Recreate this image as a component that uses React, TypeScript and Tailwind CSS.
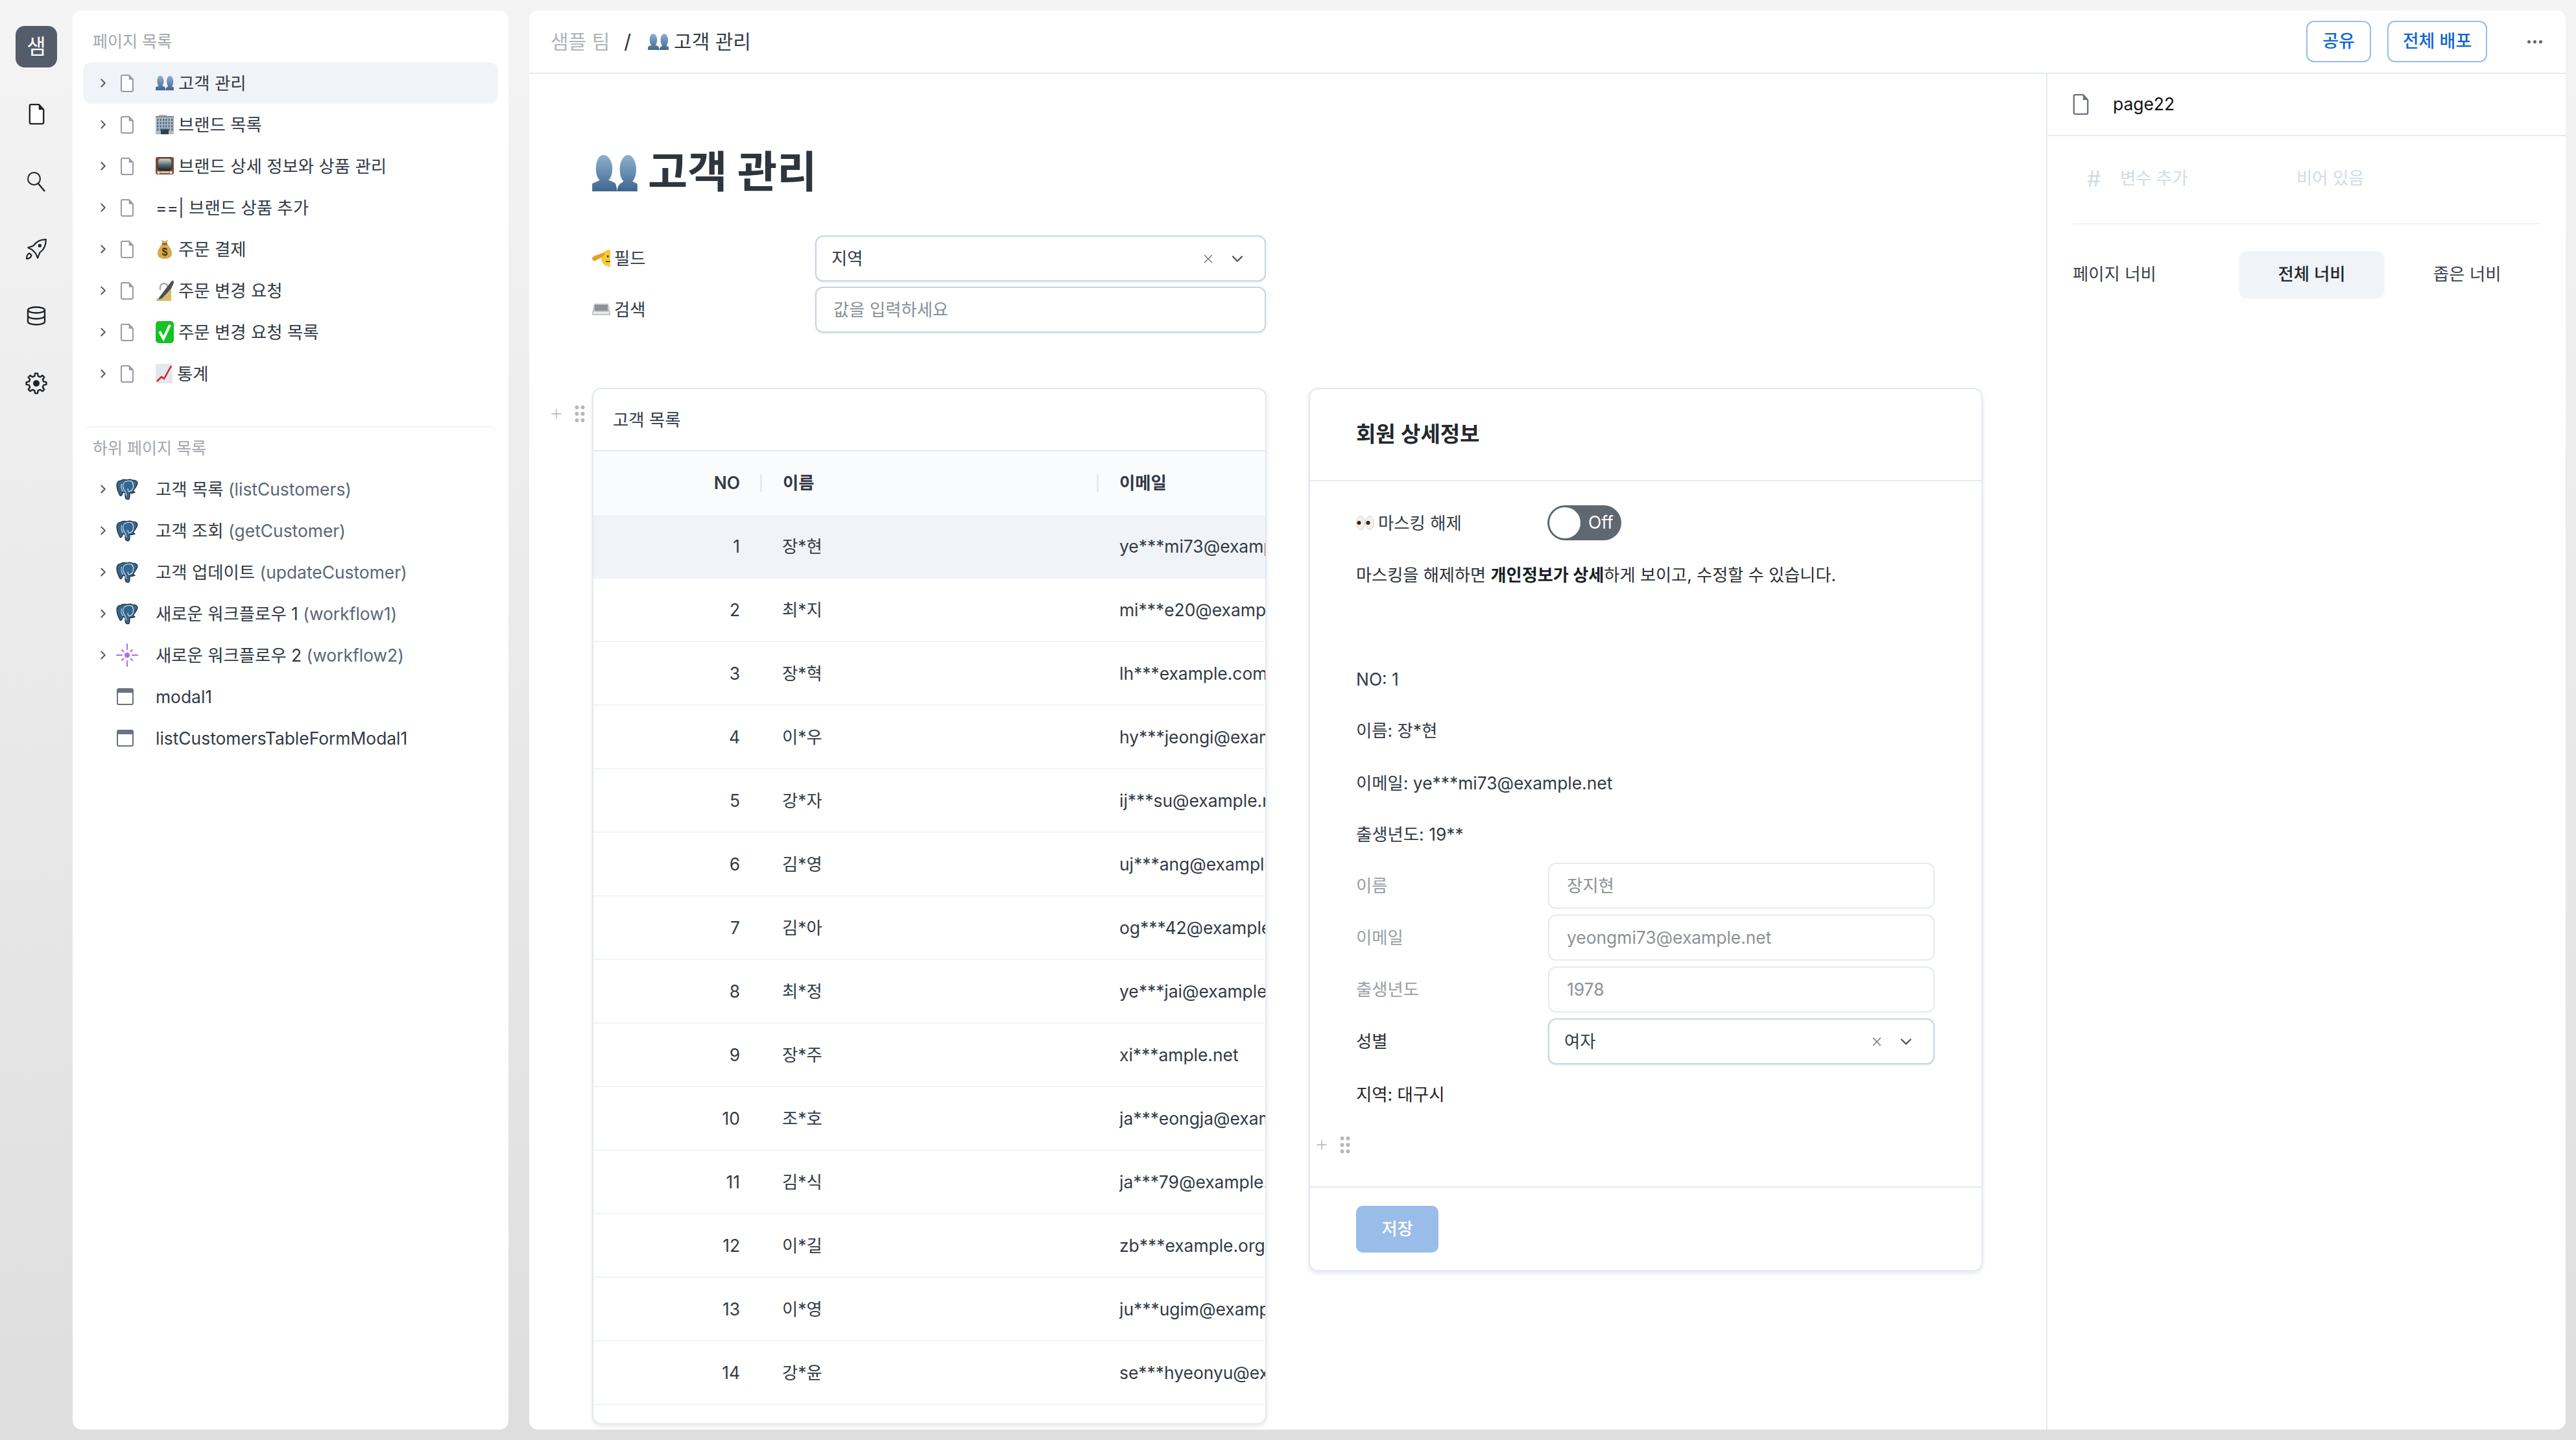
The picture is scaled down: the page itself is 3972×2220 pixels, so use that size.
import React from "react";
import { ChevronRight, ChevronDown, X, Plus } from "lucide-react";

const Busts = ({ s }: { s: number }) => (
  <svg width={s} height={s * 0.83} viewBox="0 0 36 30" className="shrink-0">
    <defs>
      <linearGradient id="bu" x1="0" y1="0" x2="0" y2="1">
        <stop offset="0" stopColor="#8fb0d2" />
        <stop offset="1" stopColor="#3f658f" />
      </linearGradient>
    </defs>
    <path d="M20 30c0-5 2-6 5-8-2-2-3-5-3-10 0-6 3-11 6.500-11S35 6 35 12c0 5-1 8-3 10l4 2v6z" fill="url(#bu)" />
    <path d="M0 30v-6c1-1 4-2 6-3-2-2-3-5-3-9C3 6 5 1 9 1s7 5 7 11c0 4-1 7-3 9 3 1 6 2 6 4l1 5z" fill="url(#bu)" />
  </svg>
);

const Building = () => (
  <svg width="28" height="30" viewBox="0 0 28 30" className="shrink-0">
    <rect x="5" y="0" width="12" height="3" fill="#b9b5aa" />
    <rect x="0" y="2" width="28" height="28" fill="#b4bcc2" />
    <rect x="0" y="2" width="28" height="2" fill="#7d8388" />
    {[6, 11, 16, 21].map((y) => (
      <g key={y}>
        {[2, 6.500, 11, 15, 19.500, 24].map((x) => (
          <rect key={x} x={x} y={y} width="2.500" height="3.500" fill="#51728c" />
        ))}
      </g>
    ))}
    <rect x="8" y="22" width="12" height="8" fill="#2f4352" />
    <rect x="7" y="21" width="14" height="1.500" fill="#6d7a84" />
  </svg>
);

const Tv = () => (
  <svg width="28" height="28" viewBox="0 0 28 28" className="shrink-0">
    <defs>
      <linearGradient id="tvs" x1="0" y1="0" x2="0" y2="1">
        <stop offset="0" stopColor="#d5dfe0" />
        <stop offset=".55" stopColor="#59686b" />
        <stop offset="1" stopColor="#1d2426" />
      </linearGradient>
    </defs>
    <rect x="0" y="0" width="28" height="27" rx="3" fill="#8c4a33" />
    <rect x="2" y="22" width="24" height="3" fill="#d8c5b4" />
    <rect x="3" y="2" width="22" height="19" rx="5" fill="url(#tvs)" stroke="#2b2f30" />
    <circle cx="4.500" cy="24" r="2.500" fill="#efe5d8" stroke="#5b3222" strokeWidth=".6" />
    <circle cx="23.500" cy="24" r="2.500" fill="#efe5d8" stroke="#5b3222" strokeWidth=".6" />
  </svg>
);

const Bag = () => (
  <svg width="28" height="30" viewBox="0 0 28 30" className="shrink-0">
    <path d="M9 1l5 2 5-2-2 6c5 4 8 10 8 15 0 5-4 8-11 8S3 27 3 22c0-5 3-11 8-15z" fill="#d9a94f" />
    <rect x="10" y="6" width="8" height="2.500" fill="#7d5a24" />
    <text x="14" y="25" textAnchor="middle" fontSize="16" fontWeight="700" fill="#4a3514" fontFamily="Liberation Sans">$</text>
  </svg>
);

const PenLock = () => (
  <svg width="28" height="32" viewBox="0 0 28 32" className="shrink-0">
    <path d="M7 15v-4a6 6 0 0 1 12 0v4" fill="none" stroke="#a9a9a9" strokeWidth="2.500" />
    <path d="M0 32L24 14v18z" fill="#d8bc64" />
    <path d="M2 31L24 2l3-2 1 4-4 9-14 15z" fill="#4a4f55" />
    <path d="M0 32l2-5 4 2z" fill="#c9c9c9" />
  </svg>
);

const Check = () => (
  <svg width="28" height="34" viewBox="0 0 28 34" className="shrink-0">
    <rect width="28" height="34" rx="5" fill="#14c322" />
    <path d="M6 16l6 11L22 6" fill="none" stroke="#fff" strokeWidth="4" />
  </svg>
);

const Chart = () => (
  <svg width="26" height="30" viewBox="0 0 26 30" className="shrink-0">
    <rect width="26" height="30" fill="#e4e8ec" />
    <path d="M2 27l7-7 4 3L24 3" fill="none" stroke="#d2232a" strokeWidth="2.500" />
  </svg>
);

const Salute = () => (
  <svg width="28" height="26" viewBox="0 0 28 26" className="shrink-0">
    <circle cx="27" cy="13" r="13" fill="#f6c83a" />
    <rect x="23" y="8.500" width="2.500" height="3.500" rx="1" fill="#4a3514" />
    <rect x="21" y="17.500" width="7" height="1.500" fill="#4a3514" />
    <path d="M0 13c1-3 7-5 11-6 3-1 6-3 8-2 1 1 0 4-2 5-3 2-8 5-12 7-3 1-5-1-5-4z" fill="#eb9f24" />
  </svg>
);

const Keyboard = () => (
  <svg width="28" height="20" viewBox="0 0 28 20" className="shrink-0">
    <path d="M3 1h22l3 14v4H0v-4z" fill="#c4c6c9" />
    <rect x="4" y="3" width="20" height="9" fill="#8e9094" />
    <rect x="2" y="14" width="24" height="3" fill="#e9eaec" />
  </svg>
);

const Eyes = () => (
  <svg width="28" height="22" viewBox="0 0 28 22" className="shrink-0">
    <ellipse cx="7" cy="11" rx="6.500" ry="10.500" fill="#f2f0ec" stroke="#d8d4cc" />
    <ellipse cx="21" cy="11" rx="6.500" ry="10.500" fill="#f2f0ec" stroke="#d8d4cc" />
    <circle cx="4.500" cy="11" r="3" fill="#3a2208" />
    <circle cx="18.500" cy="11" r="3" fill="#3a2208" />
  </svg>
);

const FileIcon = ({ w = 20, h = 27, c = "#969ba6", sw = 2 }: { w?: number; h?: number; c?: string; sw?: number }) => (
  <svg width={w} height={h} viewBox="0 0 20 27" className="shrink-0">
    <path d="M2.500 1H13l6 6.500V24a2 2 0 0 1-2 2H3a2 2 0 0 1-2-2V2.500A1.500 1.500 0 0 1 2.500 1z" fill="#fff" stroke={c} strokeWidth={sw} />
    <path d="M13 1v6.500h6z" fill={c} stroke={c} strokeWidth="0.500" />
  </svg>
);

const Elephant = () => (
  <svg width="34" height="34" viewBox="-1 -1 34 34" className="shrink-0">
    <path
      d="M6 3C2 3 0 6 0 10c0 5 2 10 4 14 1 3 3 3 4 1l2-5c1 2 2 2 3 2v5c0 4 3 5 4 5 2 0 3-2 3-5v-5c3 1 5 0 8-1l-3-2c4-5 7-10 7-13-1-3-5-4-8-4-3-1-6-1-8 0-3-1-7-1-10 1z"
      fill="#336791"
      stroke="#20262c"
      strokeWidth="1.200"
    />
    <path d="M8 8c-2 3-1 8 2 12M15 4c-4 1-6 5-5 10 1 3 3 5 4 8 0 1 0 3 1 4M23 4c3 3 3 7 2 11-1 3-3 4-6 5-1 0-2-3-2-5M15 4c2-1 5-1 8 0" fill="none" stroke="#e8eef3" strokeWidth="1.100" />
  </svg>
);

const Sparkle = () => (
  <svg width="34" height="36" viewBox="0 0 34 36" className="shrink-0">
    <circle cx="17" cy="18" r="4" fill="#a26ef7" />
    <g stroke="#a26ef7" strokeWidth="2" strokeLinecap="round">
      <path d="M17 1v8M17 27v8M1 18h8M25 18h8M9 10l2.500 2.500M25 10l-2.500 2.500M9 26l2.500-2.500M25 26l-2.500-2.500" />
    </g>
  </svg>
);

const WindowIcon = () => (
  <svg width="26" height="26" viewBox="0 0 26 26" className="shrink-0">
    <rect x="1" y="1" width="24" height="24" rx="2" fill="#fff" stroke="#6b7280" strokeWidth="2" />
    <rect x="1" y="1" width="24" height="6" fill="#6b7280" />
  </svg>
);

const RocketIcon = () => (
  <svg width="32" height="32" viewBox="0 0 30 30" fill="none" stroke="#1f2328" strokeWidth="2" strokeLinejoin="round" className="mt-[72px]">
    <path d="M29 1c-8 0-14 3-18 9l-8 3 6 3 5 5 3 7 3-8c6-4 9-10 9-19z" />
    <circle cx="20" cy="10" r="2.500" fill="#1f2328" stroke="none" />
    <path d="M5 21c-3 1-4 4-4 8 4 0 6-2 7-5z" />
  </svg>
);

const DbIcon = () => (
  <svg width="30" height="30" viewBox="0 0 30 30" fill="none" stroke="#1f2328" strokeWidth="2.400" className="mt-[72px]">
    <ellipse cx="15" cy="6" rx="13" ry="4.500" />
    <path d="M2 6v18c0 2.500 6 4.500 13 4.500S28 26.500 28 24V6M2 15c0 2.500 6 4.500 13 4.500S28 17.500 28 15" />
  </svg>
);

const gearD = (() => {
  const pts: string[] = [];
  const n = 8;
  for (let i = 0; i < n; i++) {
    const a = (i * 2 * Math.PI) / n - Math.PI / 2;
    const t = (2 * Math.PI) / n;
    const p = (r: number, o: number) => `${(17 + r * Math.cos(a + o * t)).toFixed(2)},${(17 + r * Math.sin(a + o * t)).toFixed(2)}`;
    pts.push(p(11.500, -0.3), p(15.500, -0.16), p(15.500, 0.16), p(11.500, 0.3));
  }
  return pts.join(" ");
})();

const GearIcon = () => (
  <svg width="34" height="34" viewBox="0 0 34 34" className="mt-[72px]">
    <polygon points={gearD} fill="none" stroke="#1f2328" strokeWidth="2.400" strokeLinejoin="round" />
    <circle cx="17" cy="17" r="5" fill="#1f2328" />
  </svg>
);

const Dots = () => (
  <svg width="16" height="26" viewBox="0 0 16 26">
    {[3, 13, 23].map((y) => (
      <g key={y} fill="#b8b8b8">
        <circle cx="3.500" cy={y} r="3" />
        <circle cx="12.500" cy={y} r="3" />
      </g>
    ))}
  </svg>
);

const Handle = ({ className }: { className: string }) => (
  <div className={`absolute flex items-center gap-[16px] ${className}`}>
    <Plus size={24} strokeWidth={1.4} color="#b0b0b0" />
    <Dots />
  </div>
);

const Sel = ({ text, className }: { text: string; className: string }) => (
  <div className={`flex items-center rounded-[12px] border-2 border-[#c9d5e5] bg-white pl-[23px] pr-[28px] text-[#333a45] shadow-[0_1px_3px_rgba(30,50,80,0.12)] ${className}`}>
    <span className="flex-1">{text}</span>
    <X size={22} strokeWidth={1.5} color="#6b7280" />
    <ChevronDown size={28} strokeWidth={2} color="#4b5563" className="ml-[20px]" />
  </div>
);

const pages: [React.ReactNode, string][] = [
  [<Busts s={28} />, "고객 관리"],
  [<Building />, "브랜드 목록"],
  [<Tv />, "브랜드 상세 정보와 상품 관리"],
  [null, "==| 브랜드 상품 추가"],
  [<Bag />, "주문 결제"],
  [<PenLock />, "주문 변경 요청"],
  [<Check />, "주문 변경 요청 목록"],
  [<Chart />, "통계"],
];

const subs: [string, string][] = [
  ["고객 목록 ", "(listCustomers)"],
  ["고객 조회 ", "(getCustomer)"],
  ["고객 업데이트 ", "(updateCustomer)"],
  ["새로운 워크플로우 1 ", "(workflow1)"],
  ["새로운 워크플로우 2 ", "(workflow2)"],
];

const rows: [string, string][] = [
  ["장*현", "ye***mi73@example.net"],
  ["최*지", "mi***e20@example.com"],
  ["장*혁", "lh***example.com"],
  ["이*우", "hy***jeongi@example.net"],
  ["강*자", "ij***su@example.net"],
  ["김*영", "uj***ang@example.org"],
  ["김*아", "og***42@example.net"],
  ["최*정", "ye***jai@example.net"],
  ["장*주", "xi***ample.net"],
  ["조*호", "ja***eongja@example.com"],
  ["김*식", "ja***79@example.net"],
  ["이*길", "zb***example.org"],
  ["이*영", "ju***ugim@example.com"],
  ["강*윤", "se***hyeonyu@example.net"],
];

export default function App() {
  return (
    <div className="flex h-[2220px] w-[3972px] overflow-hidden bg-gradient-to-b from-[#f4f4f4] to-[#dedede] text-[26.4px] text-[#333a45] [font-family:Inter,'Noto_Sans_CJK_KR',sans-serif]">
      {/* rail */}
      <div className="flex w-[112px] shrink-0 flex-col items-center pt-[40px]">
        <div className="flex h-[64px] w-[64px] items-center justify-center rounded-[14px] bg-[#545c6a] text-[32px] text-white">샘</div>
        <div className="mt-[56px] flex h-[32px] items-center"><FileIcon w={25} h={32} c="#1f2328" /></div>
        <svg className="mt-[72px]" width="30" height="32" viewBox="0 0 30 32" fill="none" stroke="#1f2328" strokeWidth="2">
          <circle cx="11.500" cy="11.500" r="9.500" />
          <path d="M18 19l10 12" strokeWidth="2.500" />
        </svg>
        <RocketIcon />
        <DbIcon />
        <GearIcon />
      </div>

      {/* sidebar */}
      <div className="my-[16px] flex w-[672px] shrink-0 flex-col rounded-[14px] bg-white px-[16px] pt-[32px]">
        <div className="flex h-[32px] items-center pl-[15px] pt-[2px] text-[25px] text-[#a2a6ad]">페이지 목록</div>
        <div className="mt-[16px] flex flex-col">
          {pages.map(([icon, t], i) => (
            <div key={i} className={`flex h-[64px] items-center rounded-[14px] pl-[22px] ${i === 0 ? "bg-[#f0f3f8]" : ""}`}>
              <ChevronRight size={22} strokeWidth={2} color="#4b5563" className="-ml-[2px] shrink-0" />
              <div className="ml-[12px] flex w-[28px] justify-center"><FileIcon /></div>
              <div className="ml-[30px] flex items-center gap-[7px]">
                {icon}
                <span className="pt-[1px]">{t}</span>
              </div>
            </div>
          ))}
        </div>
        <div className="mt-[49px] h-[16px] rounded-t-[14px] border-t-2 border-[#f1f3f6]" />
        <div className="mt-[2px] flex h-[32px] items-center pl-[15px] pt-[2px] text-[25px] text-[#a2a6ad]">하위 페이지 목록</div>
        <div className="mt-[15px] flex flex-col">
          {subs.map(([a, b], i) => (
            <div key={i} className="flex h-[64px] items-center pl-[22px]">
              <ChevronRight size={22} strokeWidth={2} color="#4b5563" className="-ml-[2px] shrink-0" />
              <div className="ml-[8px] flex w-[36px] justify-center">{i < 4 ? <Elephant /> : <Sparkle />}</div>
              <div className="ml-[26px] whitespace-pre pt-[1px]">
                {a}
                <span className="text-[#5b6675]">{b}</span>
              </div>
            </div>
          ))}
          {["modal1", "listCustomersTableFormModal1"].map((t) => (
            <div key={t} className="flex h-[64px] items-center pl-[52px]">
              <WindowIcon />
              <span className="ml-[34px] pt-[1px]">{t}</span>
            </div>
          ))}
        </div>
      </div>

      {/* main */}
      <div className="my-[16px] ml-[32px] mr-[16px] flex min-w-0 flex-1 flex-col overflow-hidden rounded-[14px] bg-white">
        <header className="flex h-[98px] shrink-0 items-center border-b-2 border-[#e3ebf2] pl-[33px] pr-[36px]">
          <span className="text-[30px] text-[#b0b4ba]">샘플 팀</span>
          <span className="ml-[22px] text-[30px] text-[#2a2f36]">/</span>
          <span className="ml-[26px] flex items-center gap-[8px] text-[30px]">
            <Busts s={32} />
            고객 관리
          </span>
          <div className="flex-1" />
          <button className="flex h-[64px] w-[100px] items-center justify-center rounded-[12px] border-2 border-[#93bdf0] text-[27px] font-medium text-[#0f68d3]">공유</button>
          <button className="ml-[25px] flex h-[64px] w-[154px] items-center justify-center rounded-[12px] border-2 border-[#93bdf0] text-[27px] font-medium text-[#0f68d3]">전체 배포</button>
          <div className="ml-[62px] flex gap-[4px]">
            <i className="h-[5px] w-[5px] rounded-full bg-[#5f6770]" />
            <i className="h-[5px] w-[5px] rounded-full bg-[#5f6770]" />
            <i className="h-[5px] w-[5px] rounded-full bg-[#5f6770]" />
          </div>
        </header>
        <div className="flex min-h-0 flex-1">
          {/* canvas */}
          <div className="relative w-[2339px] shrink-0 overflow-hidden pl-[97px] pt-[112px]">
            <h1 className="flex h-[80px] items-center gap-[16px] text-[66.5px] font-bold text-[#2f353c]">
              <Busts s={70} />
              고객 관리
            </h1>
            <div className="mt-[57px] flex h-[71px] w-[1039px] items-center">
              <div className="flex w-[344px] items-center gap-[6px]"><Salute />필드</div>
              <Sel text="지역" className="h-[71px] flex-1" />
            </div>
            <div className="mt-[8px] flex h-[71px] w-[1039px] items-center">
              <div className="flex w-[344px] items-center gap-[6px]"><Keyboard />검색</div>
              <div className="flex h-[71px] flex-1 items-center rounded-[12px] border-2 border-[#c9d5e5] pl-[26px] text-[#8a8f98] shadow-[0_1px_3px_rgba(30,50,80,0.12)]">값을 입력하세요</div>
            </div>
            <div className="mt-[85px] flex items-start gap-[65px]">
              {/* table */}
              <div className="relative h-[1598px] w-[1040px] shrink-0">
                <Handle className="-left-[67px] top-[27px]" />
                <div className="h-full overflow-hidden rounded-[14px] border-2 border-[#e1e9f0] shadow-[0_3px_6px_rgba(30,50,80,0.1)]">
                  <div className="flex h-[96px] items-center border-b-2 border-[#e3ebf2] pl-[30px] pt-[1px]">고객 목록</div>
                  <div className="flex h-[98px] items-center bg-[#fafbfd] font-semibold">
                    <div className="w-[226px] text-right">NO</div>
                    <div className="ml-[31px] h-[28px] w-[3px] bg-[#e3ebf2]" />
                    <div className="ml-[32px] w-[484px]">이름</div>
                    <div className="h-[28px] w-[3px] bg-[#e3ebf2]" />
                    <div className="ml-[32px]">이메일</div>
                  </div>
                  {rows.map(([n, e], i) => (
                    <div key={i} className={`flex h-[98px] items-center whitespace-nowrap border-b-2 pt-[2px] ${i === 0 ? "border-[#f0f3f8] bg-[#f0f3f8]" : "border-[#f1f4f8]"}`}>
                      <div className="w-[226px] shrink-0 text-right">{i + 1}</div>
                      <div className="ml-[65px] w-[520px] shrink-0">{n}</div>
                      <div className="w-[227px] shrink-0 overflow-hidden">{e}</div>
                    </div>
                  ))}
                </div>
              </div>
              {/* detail */}
              <div className="relative flex h-[1362px] w-[1039px] shrink-0 flex-col rounded-[14px] border-2 border-[#e1e9f0] shadow-[0_3px_6px_rgba(30,50,80,0.12)]">
                <div className="flex h-[142px] shrink-0 items-center border-b-2 border-[#e3ebf2] pl-[71px] text-[33px] font-semibold text-[#24282e]">회원 상세정보</div>
                <div className="relative flex-1 pl-[71px]">
                  <div className="mt-[37px] flex h-[54px] items-center">
                    <div className="flex w-[295px] items-center gap-[6px]"><Eyes /><span className="pt-[1px]">마스킹 해제</span></div>
                    <div className="flex h-[54px] w-[114px] items-center rounded-full bg-[#5f6770] pl-[3px]">
                      <div className="h-[48px] w-[48px] rounded-full bg-white" />
                      <span className="ml-[12px] text-white">Off</span>
                    </div>
                  </div>
                  <p className="mt-[34px] flex h-[40px] items-center whitespace-pre text-[26.2px] text-[#2b3036]">
                    마스킹을 해제하면 <b className="font-bold text-[#1b1f24]">개인정보가 상세</b>하게 보이고, 수정할 수 있습니다.
                  </p>
                  <div className="mt-[121px] flex h-[40px] items-center">NO: 1</div>
                  <div className="mt-[39px] flex h-[40px] items-center">이름: 장*현</div>
                  <div className="mt-[41px] flex h-[40px] items-center">이메일: ye***mi73@example.net</div>
                  <div className="mt-[39px] flex h-[40px] items-center">출생년도: 19**</div>
                  <div className="mt-[23px] flex flex-col gap-[9px]">
                    {[["이름", "장지현"], ["이메일", "yeongmi73@example.net"], ["출생년도", "1978"]].map(([l, v]) => (
                      <div key={l} className="flex h-[71px] items-center text-[#9a9ea5]">
                        <div className="w-[296px]">{l}</div>
                        <div className="flex h-[71px] w-[596px] items-center rounded-[12px] border-2 border-[#e5ebf2] pl-[27px] text-[#8d9197]">{v}</div>
                      </div>
                    ))}
                    <div className="flex h-[71px] items-center">
                      <div className="w-[296px] text-[#2b3036]">성별</div>
                      <Sel text="여자" className="h-[71px] w-[596px]" />
                    </div>
                  </div>
                  <div className="mt-[27px] flex h-[40px] items-center text-[#1f2328]">지역: 대구시</div>
                  <Handle className="left-[6px] top-[1010px]" />
                </div>
                <div className="flex h-[129px] shrink-0 items-center border-t-2 border-[#e3ebf2] pl-[71px]">
                  <button className="flex h-[72px] w-[127px] items-center justify-center rounded-[10px] bg-[#9abce8] font-medium text-white">저장</button>
                </div>
              </div>
            </div>
          </div>
          {/* right panel */}
          <aside className="flex flex-1 flex-col border-l-2 border-[#e3ebf2]">
            <div className="flex h-[96px] shrink-0 items-center gap-[37px] border-b-2 border-[#e3ebf2] pl-[39px] text-[#111]">
              <FileIcon w={25} h={32} c="#6b7280" />
              page22
            </div>
            <div className="mx-[39px] flex h-[136px] shrink-0 items-center border-b-2 border-[#f1f3f6] pb-[4px] text-[#d3dbe6]">
              <span className="ml-[22px] w-[51px] text-[34px]">#</span>
              <span className="w-[272px]">변수 추가</span>
              <span>비어 있음</span>
            </div>
            <div className="mx-[39px] mt-[40px] flex h-[72px] items-center pt-[1px] text-[#3a4048]">
              <span className="w-[257px]">페이지 너비</span>
              <div className="flex h-[72px] w-[223px] items-center justify-center rounded-[12px] bg-[#f0f3f8] font-medium text-[#24282e] shadow-[0_1px_3px_rgba(30,50,80,0.08)]">전체 너비</div>
              <span className="ml-[76px]">좁은 너비</span>
            </div>
          </aside>
        </div>
      </div>
    </div>
  );
}
